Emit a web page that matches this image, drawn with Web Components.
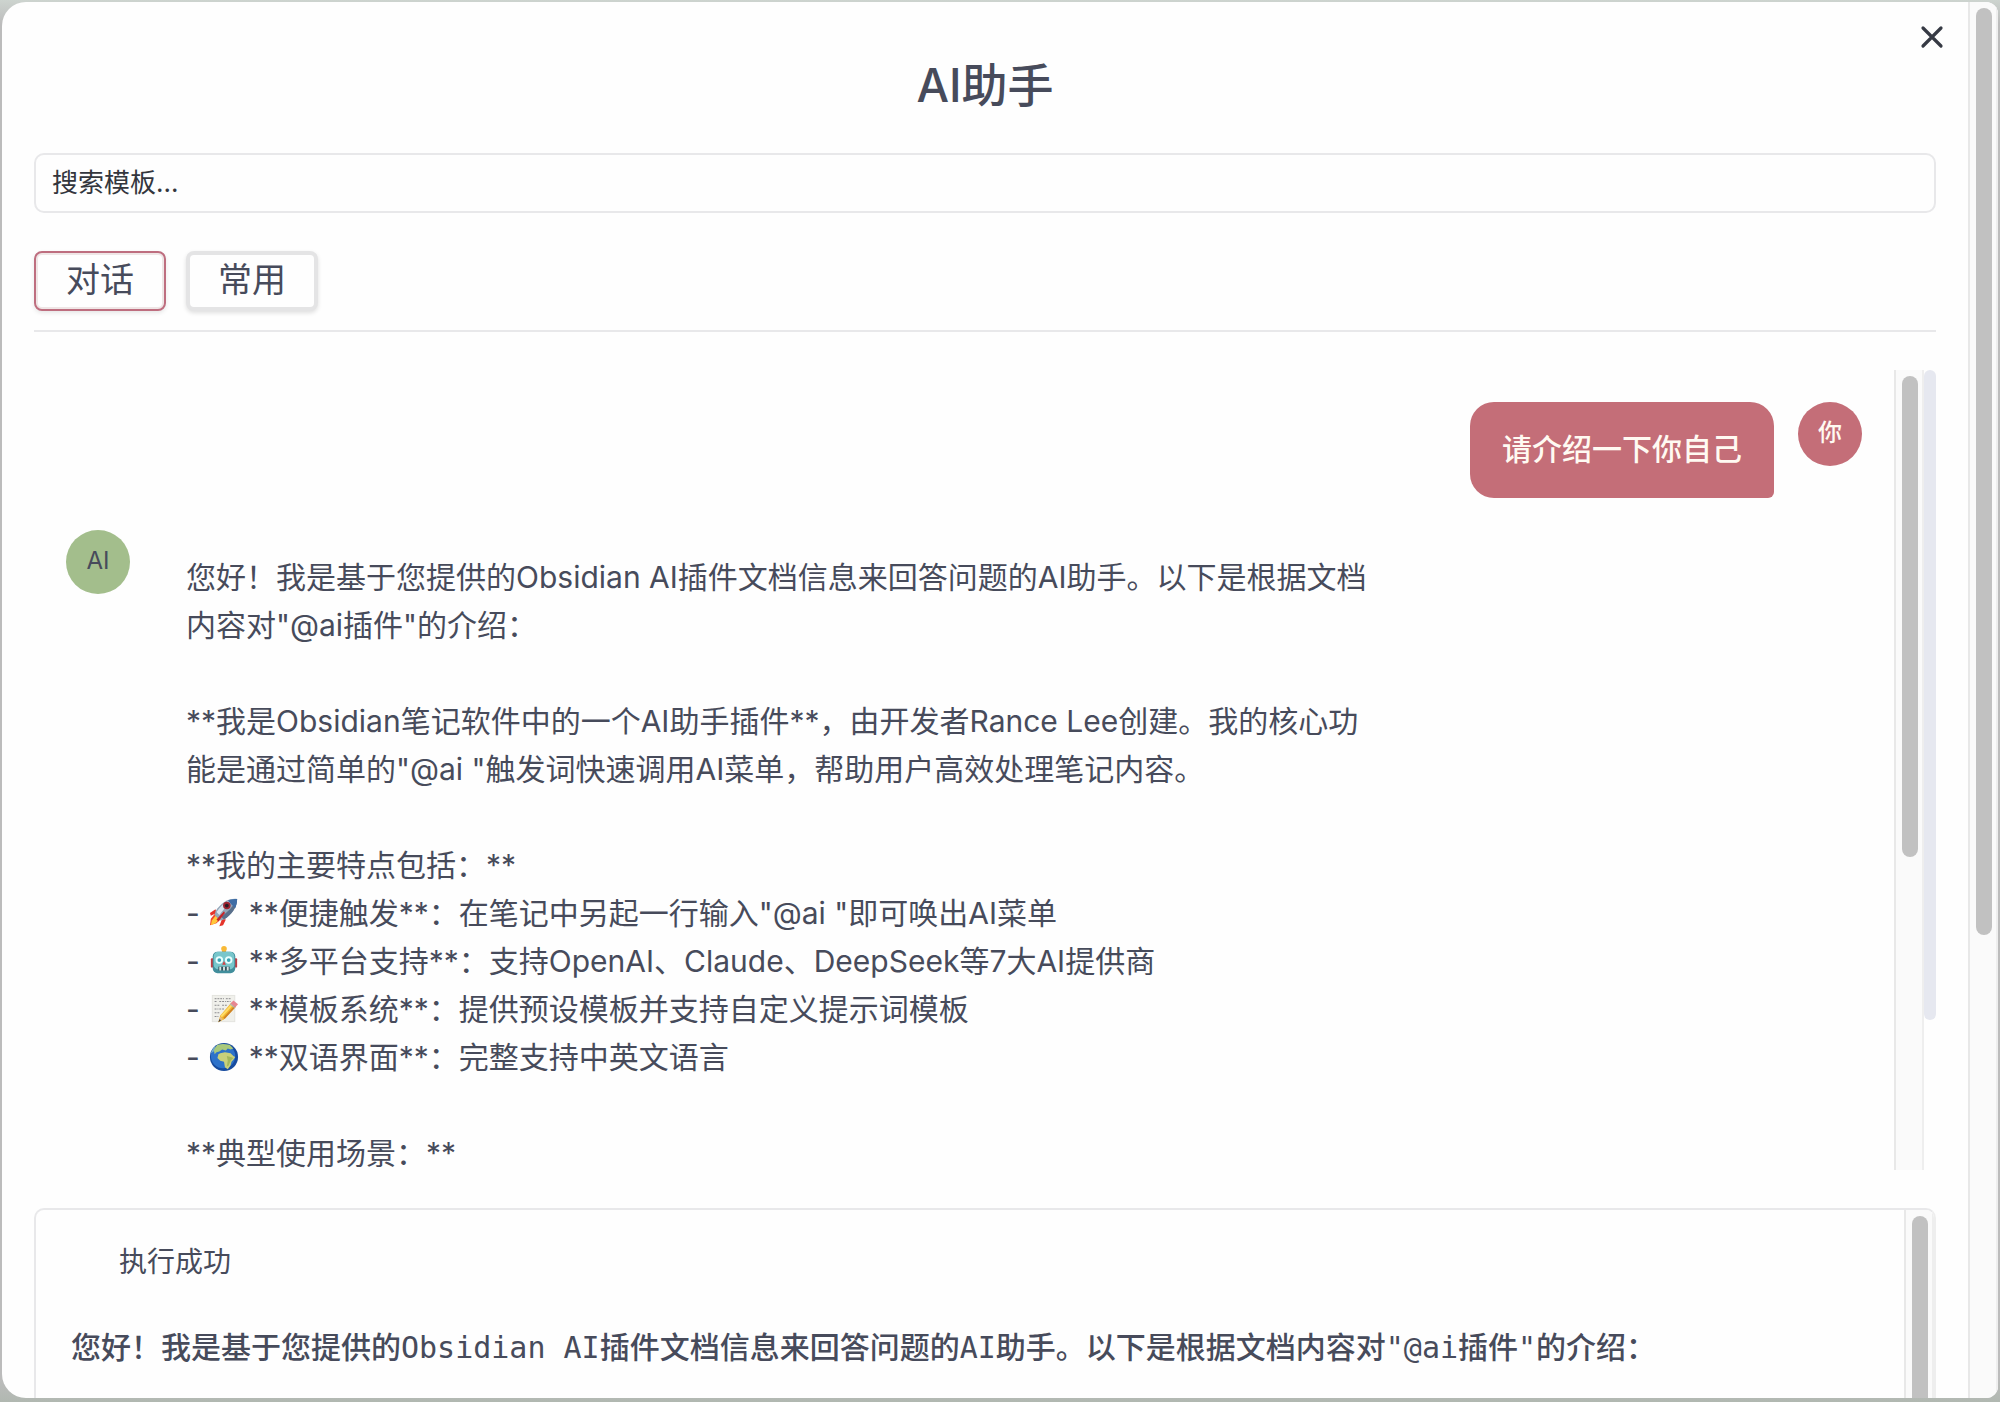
<!DOCTYPE html>
<html lang="zh-CN">
<head>
<meta charset="utf-8">
<title>AI助手</title>
<style>
  html, body {
    height: 100%;
    margin: 0;
  }
  body {
    background: linear-gradient(#cdd4cf, #bcbcbc 24px, #bcbcbc calc(100% - 24px), #b1b8b1);
    color: #474b5b;
    font-family: Inter, "Noto Sans CJK SC", sans-serif;
    font-size: 30px;
    line-height: 48px;
  }
</style>
</head>
<body>
<assistant-dialog heading="AI助手">
  <template-search slot="search" placeholder="搜索模板..."></template-search>
  <tab-bar slot="tabs">
    <tab-button active>对话</tab-button>
    <tab-button>常用</tab-button>
  </tab-bar>
  <chat-panel slot="chat">
    <chat-message from="user" avatar="你"><div>请介绍一下你自己</div></chat-message>
    <chat-message from="ai" avatar="AI">
      <div>您好！我是基于您提供的Obsidian AI插件文档信息来回答问题的AI助手。以下是根据文档内容对"@ai插件"的介绍：</div>
      <div><br></div>
      <div>**我是Obsidian笔记软件中的一个AI助手插件**，由开发者Rance Lee创建。我的核心功能是通过简单的"@ai "触发词快速调用AI菜单，帮助用户高效处理笔记内容。</div>
      <div><br></div>
      <div>**我的主要特点包括：**</div>
      <div>- <emoji-icon name="rocket"></emoji-icon> **便捷触发**：在笔记中另起一行输入"@ai "即可唤出AI菜单</div>
      <div>- <emoji-icon name="robot"></emoji-icon> **多平台支持**：支持OpenAI、Claude、DeepSeek等7大AI提供商</div>
      <div>- <emoji-icon name="memo"></emoji-icon> **模板系统**：提供预设模板并支持自定义提示词模板</div>
      <div>- <emoji-icon name="globe"></emoji-icon> **双语界面**：完整支持中英文语言</div>
      <div><br></div>
      <div>**典型使用场景：**</div>
    </chat-message>
  </chat-panel>
  <result-panel slot="result" status="执行成功">您好！我是基于您提供的Obsidian AI插件文档信息来回答问题的AI助手。以下是根据文档内容对"@ai插件"的介绍：</result-panel>
</assistant-dialog>

<script>
'use strict';

(function () {
  // dialog window with its close button and outer scroll bar
  class AssistantDialog extends HTMLElement {
    constructor() {
      super();
      const shadow = this.attachShadow({ mode: 'open' });
      shadow.innerHTML = `
        <style>
          :host {
            display: flex;
            position: relative;
            box-sizing: border-box;
            height: 100vh;
            padding: 2px 2px 4px;
          }
          .window {
            display: flex;
            flex: 1;
            min-width: 0;
            overflow: hidden;
            border-radius: 24px 12px 12px 24px;
            background: #fefefe;
          }
          .content {
            flex: 1;
            min-width: 0;
            padding: 51px 32px 0;
          }
          h2 {
            margin: 0 0 36px;
            font-size: 46px;
            font-weight: 500;
            line-height: 64px;
            text-align: center;
          }
          .close {
            position: absolute;
            top: 21px;
            right: 52px;
            width: 32px;
            height: 32px;
            padding: 0;
            border: 0;
            background: none;
            color: #363a44;
          }
          .close svg {
            display: block;
          }
        </style>
        <div class="window">
          <div class="content">
            <h2></h2>
            <slot name="search"></slot>
            <slot name="tabs"></slot>
            <slot name="chat"></slot>
            <slot name="result"></slot>
          </div>
          <scroll-track style="--thumb: calc(67% - 4px)"></scroll-track>
        </div>
        <button class="close" type="button" aria-label="Close">
          <svg width="32" height="32" viewBox="0 0 32 32" fill="none" stroke="currentColor" stroke-width="3.2" stroke-linecap="round">
            <path d="M7 7 25 25M25 7 7 25"/>
          </svg>
        </button>
      `;
      shadow.querySelector('h2').textContent = this.getAttribute('heading');
    }
  }

  // track with a rounded thumb, --thumb sets the length
  class ScrollTrack extends HTMLElement {
    constructor() {
      super();
      this.attachShadow({ mode: 'open' }).innerHTML = `
        <style>
          :host {
            display: block;
            flex: none;
            box-sizing: border-box;
            width: 30px;
            padding: 6px 6px 0;
            border-left: 2px solid #e8e8e8;
            border-right: 2px solid #eeeeee;
            background: #fafafa;
          }
          div {
            width: 16px;
            height: var(--thumb, 50%);
            border-radius: 8px;
            background: #c1c1c1;
          }
        </style>
        <div></div>
      `;
    }
  }

  class TemplateSearch extends HTMLElement {
    constructor() {
      super();
      const shadow = this.attachShadow({ mode: 'open' });
      shadow.innerHTML = `
        <style>
          :host {
            display: block;
          }
          input {
            display: block;
            box-sizing: border-box;
            width: 100%;
            height: 60px;
            padding: 0 16px 2px;
            border: 2px solid #e8e8ea;
            border-radius: 10px;
            background: #fefefe;
            color: #33363d;
            font-family: inherit;
            font-size: 26px;
          }
          input::placeholder {
            color: #33363d;
            opacity: 1;
          }
        </style>
        <input type="text">
      `;
      const input = shadow.querySelector('input');
      input.placeholder = this.getAttribute('placeholder');
      input.setAttribute('aria-label', input.placeholder);
    }
  }

  class TabBar extends HTMLElement {
    constructor() {
      super();
      this.attachShadow({ mode: 'open' }).innerHTML = `
        <style>
          :host {
            display: flex;
            gap: 20px;
            margin: 38px 0;
            padding-bottom: 19px;
            border-bottom: 2px solid #e8e8ea;
          }
        </style>
        <slot></slot>
      `;
    }
  }

  class TabButton extends HTMLElement {
    constructor() {
      super();
      this.attachShadow({ mode: 'open' }).innerHTML = `
        <style>
          :host {
            display: block;
          }
          button {
            display: block;
            box-sizing: border-box;
            height: 60px;
            padding: 0 28px 2px;
            border: 4px solid #e4e4e5;
            border-radius: 8px;
            background: #fefefe;
            box-shadow: 0 2px 4px #00000020;
            color: inherit;
            font-family: inherit;
            font-size: 34px;
            line-height: 48px;
          }
          :host([active]) button {
            padding: 0 30px 2px;
            border: 2px solid #be6e7f;
            box-shadow: inset 0 0 0 2px #efe6e6, 0 2px 4px #00000018;
          }
        </style>
        <button type="button"><slot></slot></button>
      `;
    }
  }

  class ChatPanel extends HTMLElement {
    constructor() {
      super();
      this.attachShadow({ mode: 'open' }).innerHTML = `
        <style>
          :host {
            display: flex;
            height: 800px;
            margin-bottom: 38px;
          }
          .messages {
            display: flex;
            flex: 1;
            flex-direction: column;
            gap: 32px;
            box-sizing: border-box;
            min-width: 0;
            padding: 32px;
            overflow: hidden;
          }
          .rail {
            width: 12px;
            height: 650px;
            border-radius: 6px;
            background: #e6e8f0;
          }
        </style>
        <div class="messages"><slot></slot></div>
        <scroll-track style="--thumb: 481px"></scroll-track>
        <div class="rail"></div>
      `;
    }
  }

  class ChatMessage extends HTMLElement {
    constructor() {
      super();
      const shadow = this.attachShadow({ mode: 'open' });
      shadow.innerHTML = `
        <style>
          :host {
            display: flex;
            flex: none;
            align-items: flex-start;
            gap: 24px;
          }
          :host([from="user"]) {
            flex-direction: row-reverse;
          }
          .avatar {
            flex: none;
            width: 64px;
            height: 64px;
            border-radius: 50%;
            background: #a3be8c;
            font-size: 24px;
            line-height: 62px;
            text-align: center;
          }
          .bubble {
            box-sizing: border-box;
            max-width: 70%;
            padding: 23px 32px 25px;
          }
          :host([from="user"]) .avatar,
          :host([from="user"]) .bubble {
            background: #c46e78;
            color: #fffaf2;
            font-weight: 500;
          }
          :host([from="user"]) .bubble {
            border-radius: 24px 24px 6px 24px;
          }
        </style>
        <div class="avatar"></div>
        <div class="bubble"><slot></slot></div>
      `;
      shadow.querySelector('.avatar').textContent = this.getAttribute('avatar');
    }
  }

  class ResultPanel extends HTMLElement {
    constructor() {
      super();
      const shadow = this.attachShadow({ mode: 'open' });
      shadow.innerHTML = `
        <style>
          :host {
            display: flex;
            height: 400px;
            overflow: hidden;
            border: 2px solid #e8e8ea;
            border-right-color: #eeeeee;
            border-radius: 10px;
          }
          .body {
            flex: 1;
            min-width: 0;
            padding: 28px 35px;
          }
          .status {
            margin: 0 0 38px;
            padding-left: 48px;
            font-size: 28px;
          }
          pre {
            margin: 0;
            font-family: "DejaVu Sans Mono", "Noto Sans CJK SC", monospace;
            font-weight: 500;
            white-space: pre-wrap;
          }
        </style>
        <div class="body">
          <p class="status"></p>
          <pre><slot></slot></pre>
        </div>
        <scroll-track style="--thumb: 100%"></scroll-track>
      `;
      shadow.querySelector('.status').textContent = this.getAttribute('status');
    }
  }

  const icons = {
    rocket: `
      <path d="M7 12 1 16l1 3 6-3zM18 23l-3 6-4 1 3-8z" fill="#e5342a"/>
      <path d="m6 17-4 5-1 7 7-2 5-5z" fill="#f4472c"/>
      <path d="m7 19-4 5-1 5 5-2 4-4z" fill="#ffc83a"/>
      <path d="M30 1C21 0 13 5 7 14l-1 4 6 6 4-1C25 17 30 9 30 1z" fill="#94a6b8"/>
      <path d="M30 1C21 1 14 6 8 15l3 3C17 10 23 5 30 1z" fill="#d9e4ee"/>
      <path d="M30 1c0 9-6 17-14 22l-3-3C20 15 26 9 30 1z" fill="#596f8b"/>
      <path d="M30 1c-4 0-7 0-10 2l8 8c1-3 2-6 2-10z" fill="#3f6da5"/>
      <circle cx="19" cy="8" r="4" fill="#9d2432"/>
      <circle cx="19" cy="8" r="2" fill="#281b26"/>
      <path d="m8 23 8-9 1 2-7 9z" fill="#c52328"/>`,
    robot: `
      <path d="M14 3h4v4h-4z" fill="#d9903a"/>
      <circle cx="16" cy="3" r="3" fill="#f8b936"/>
      <rect x="2" y="13" width="4" height="10" rx="1" fill="#bd3e45"/>
      <rect x="26" y="13" width="4" height="10" rx="1" fill="#bd3e45"/>
      <rect x="4" y="6" width="24" height="23" rx="5" fill="#418e9c"/>
      <rect x="5" y="6" width="22" height="19" rx="5" fill="#78c6cb"/>
      <circle cx="11" cy="15" r="4" fill="#e8ffff"/>
      <circle cx="21" cy="15" r="4" fill="#e8ffff"/>
      <circle cx="11" cy="15" r="2" fill="#3aa4b5"/>
      <circle cx="21" cy="15" r="2" fill="#3aa4b5"/>
      <path d="m16 16 2 4h-4z" fill="#d44245"/>
      <path d="M10 22h12v4H10z" fill="#32525c"/>
      <path d="M12 22v4M16 22v4M20 22v4" stroke="#d7e5e5" stroke-width="2"/>`,
    memo: `
      <path d="M3 1h25v29H3z" fill="#e3e3df"/>
      <path d="M4 2h23v27H4z" fill="#f0f0eb"/>
      <path d="M6 5h5m1 0h4m2 0h6M6 8h3m2 0h7m1 0h4M6 12h6m2 0h6M6 16h4m1 0h6M6 20h6M6 24h4" stroke="#85858a" stroke-dasharray="2 1"/>
      <path d="m24 9 5 4-13 14-6 3 2-7z" fill="#f2b72f"/>
      <path d="m25 11-12 13" stroke="#ffdc68" stroke-width="2"/>
      <path d="m28 13-12 13" stroke="#cf8325" stroke-width="2"/>
      <path d="m23 10 3-3 5 4-3 3z" fill="#e78691"/>
      <path d="m22 11 1-1 5 4-1 1z" fill="#aeb4b7"/>
      <path d="m12 24-2 6 5-3z" fill="#e8bc83"/>
      <path d="m10 30 1-3 2 1z" fill="#45413d"/>`,
    globe: `
      <circle cx="16" cy="16" r="15" fill="#174b9e"/>
      <circle cx="15" cy="15" r="13" fill="#2d72ca"/>
      <path d="m5 8 4-5 6-1 7 1 4 4-3 1-3-1-2 2-4-1-3 2-3 1-2 2z" fill="#a9c97c"/>
      <path d="m12 12 5-1 6 1 3 3 2 1-2 3-2 2-1 4-3 4-3-2-1-6-4-1-3-3 1-4z" fill="#c9d07a"/>
      <path d="m19 15 4 1 3 1-3 3-2 5-2 1 1-6z" fill="#a3b65c"/>
      <path d="M2 12c1-4 3-6 5-8L5 10z" fill="#76adcc"/>`
  };

  // small inline picture placed between words
  class EmojiIcon extends HTMLElement {
    constructor() {
      super();
      this.attachShadow({ mode: 'open' }).innerHTML = `
        <style>
          :host {
            display: inline-block;
            height: 30px;
            margin: 0 1px;
            line-height: 0;
            vertical-align: -4px;
          }
          svg {
            display: block;
          }
        </style>
        <svg width="30" height="30" viewBox="0 0 32 32" aria-hidden="true">${icons[this.getAttribute('name')]}</svg>
      `;
    }
  }

  customElements.define('scroll-track', ScrollTrack);
  customElements.define('emoji-icon', EmojiIcon);
  customElements.define('assistant-dialog', AssistantDialog);
  customElements.define('template-search', TemplateSearch);
  customElements.define('tab-bar', TabBar);
  customElements.define('tab-button', TabButton);
  customElements.define('chat-panel', ChatPanel);
  customElements.define('chat-message', ChatMessage);
  customElements.define('result-panel', ResultPanel);
})();
</script>
</body>
</html>
